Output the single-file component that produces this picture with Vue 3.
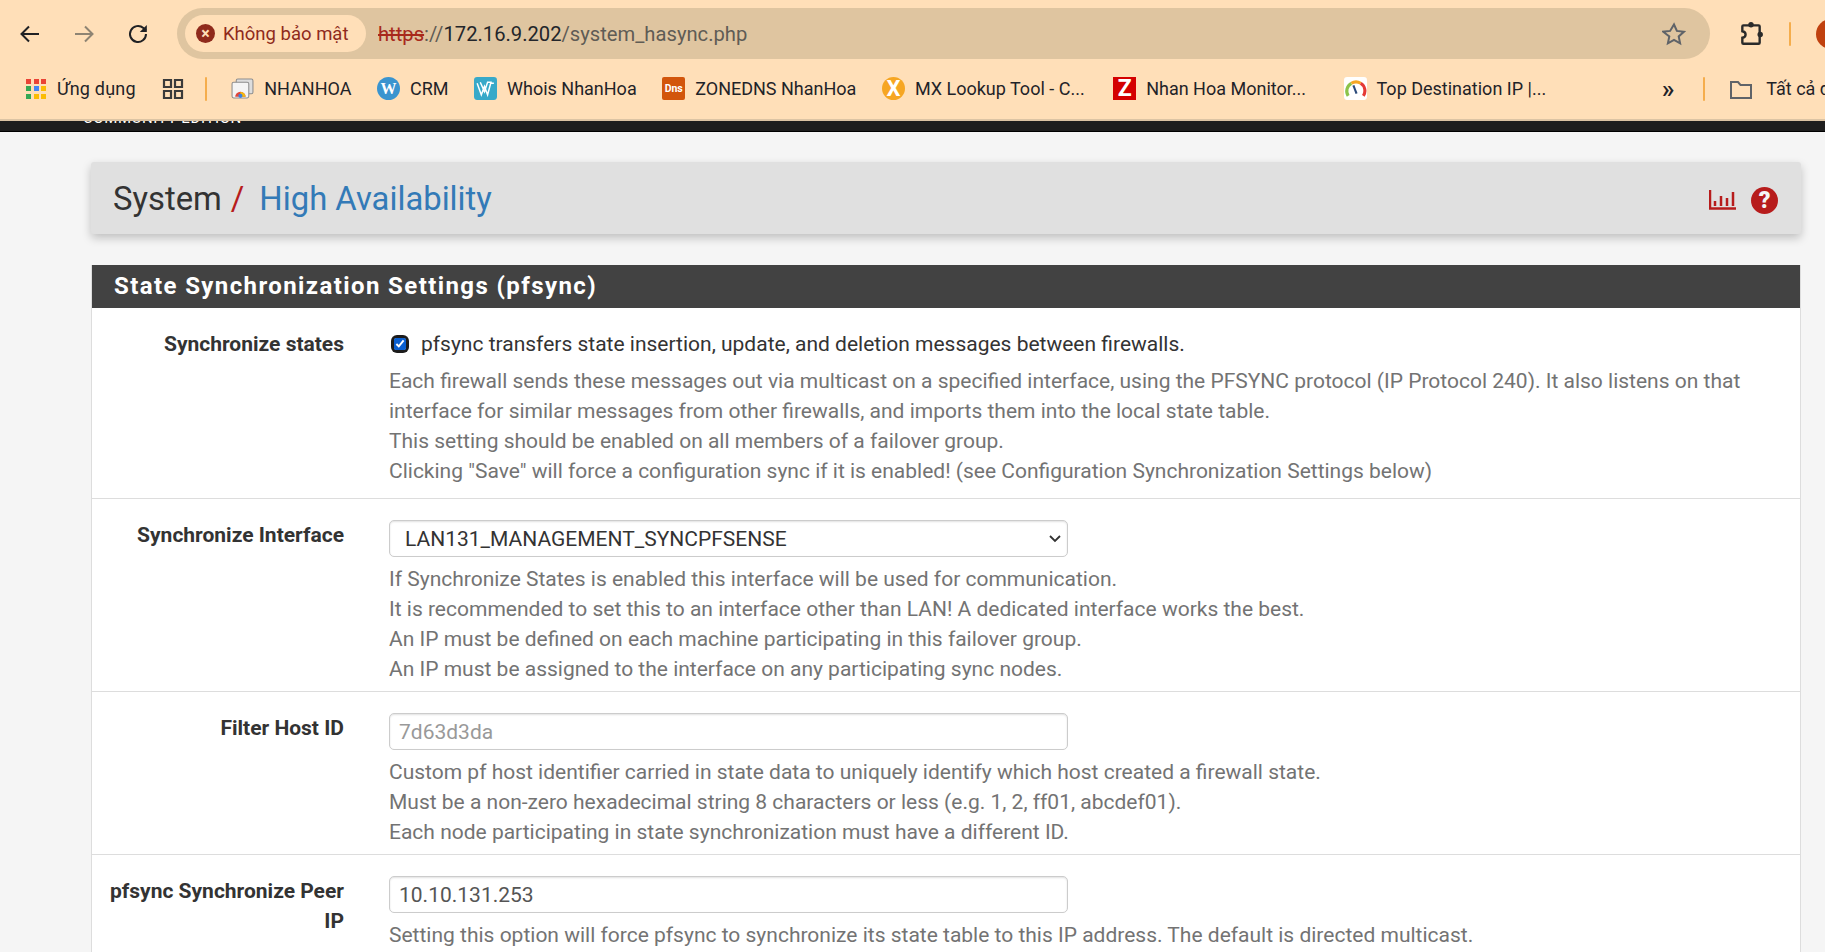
<template>
  <div class="screen">
    <!-- Browser chrome -->
    <div class="browser">
      <div class="toolbar">
        <svg class="nav back" viewBox="0 0 24 24"><path d="M21 12H4M11 4.5 3.5 12l7.5 7.5" /></svg>
        <svg class="nav forward" viewBox="0 0 24 24"><path d="M3 12h17M13 4.5l7.5 7.5-7.5 7.5" /></svg>
        <svg class="nav reload" viewBox="0 0 24 24"><path d="M20 12a8 8 0 1 1-2.6-5.9L20 8.5" /><path class="solid" d="M20.8 3v7h-7z" /></svg>
        <div class="omnibox">
          <div class="chip">
            <span class="chip-icon">×</span>
            <span>Không bảo mật</span>
          </div>
          <div class="url"><s>https</s><span class="dim">://</span>172.16.9.202<span class="dim">/system_hasync.php</span></div>
          <svg class="star" viewBox="0 0 24 24"><path d="M12 2.5l2.9 6.4 7 .8-5.2 4.7 1.4 6.9-6.1-3.5-6.1 3.5 1.4-6.9L1.100 9.700l7-.8z" /></svg>
        </div>
        <svg class="puzzle" viewBox="0 0 24 24">
          <path d="M5 4h14a1 1 0 0 1 1 1v15a1 1 0 0 1-1 1H5a1 1 0 0 1-1-1v-4.500c2-.3 3-1.500 3-3s-1-2.700-3-3V5a1 1 0 0 1 1-1z" />
          <circle cx="12" cy="3.500" r="2.500" />
          <circle cx="20.500" cy="12.500" r="2.500" />
        </svg>
        <span class="bar-sep top-sep"></span>
        <span class="avatar">T</span>
      </div>

      <div class="bookmarks">
        <span class="bm apps-bm">
          <span class="apps">
            <i v-for="(c, i) in appColors" :key="i" :style="{ background: c }"></i>
          </span>
          Ứng dụng
        </span>
        <svg class="tabs-icon" viewBox="0 0 22 22"><path d="M2 2h7v7H2zM13 2h7v7h-7zM2 13h7v7H2zM13 13h7v7h-7z" /></svg>
        <span class="bar-sep"></span>
        <span class="bm">
          <svg class="fav" viewBox="0 0 22 22">
            <rect x="5" y="2" width="16" height="14" rx="1.500" fill="#ddd" stroke="#8d8d8d" />
            <rect x="1" y="5" width="16" height="15" rx="1.500" fill="#f4f4f4" stroke="#8d8d8d" />
            <path d="M4 19a5 5 0 0 1 10 0z" fill="#e0463a" />
            <path d="M9 19v-5a5 5 0 0 1 5 5z" fill="#f2b90f" />
            <circle cx="9" cy="18" r="2" fill="#3b82e0" />
          </svg>
          NHANHOA
        </span>
        <span class="bm">
          <span class="fav round wp">W</span>
          CRM
        </span>
        <span class="bm">
          <svg class="fav" viewBox="0 0 22 22">
            <rect width="22" height="22" rx="3" fill="#38a9c9" />
            <path d="M3 6l4 11 3-8 3 8 3-11h3M6 5l4 9 3-9h4" fill="none" stroke="#fff" stroke-width="1.400" />
          </svg>
          Whois NhanHoa
        </span>
        <span class="bm">
          <span class="fav dns">Dns</span>
          ZONEDNS NhanHoa
        </span>
        <span class="bm">
          <span class="fav round mx">X</span>
          MX Lookup Tool - C...
        </span>
        <span class="bm monitor">
          <span class="fav zbx">Z</span>
          Nhan Hoa Monitor...
        </span>
        <span class="bm top-dest">
          <svg class="fav" viewBox="0 0 22 22">
            <rect width="22" height="22" rx="3" fill="#fff" />
            <path d="M4 18a8.500 8.500 0 0 1 3-12" fill="none" stroke="#8bc34a" stroke-width="3" />
            <path d="M7 6a8.500 8.500 0 0 1 9 0" fill="none" stroke="#f5a623" stroke-width="3" />
            <path d="M16 6a8.500 8.500 0 0 1 2.500 12" fill="none" stroke="#e53935" stroke-width="3" />
            <path d="M9 8l3 8" stroke="#2a4a7a" stroke-width="2" />
          </svg>
          Top Destination IP |...
        </span>
        <span class="more">»</span>
        <span class="bar-sep"></span>
        <span class="bm all">
          <svg class="folder" viewBox="0 0 24 22"><path d="M2 4h7l2.500 3H22v13H2z" /></svg>
          Tất cả dấu trang
        </span>
      </div>
    </div>

    <!-- pfSense top nav, scrolled under the browser bar -->
    <div class="topnav"><span class="edition">COMMUNITY EDITION</span></div>

    <div class="page">
      <div class="page-head">
        <h1 class="crumbs">System<span class="slash">/</span><a class="crumb-link">High Availability</a></h1>
        <div class="head-icons">
          <svg class="chart" viewBox="0 0 27 20">
            <path d="M1 0v18.500h26" />
            <path d="M6 11v5M12 6v10M18 8v8M24 2v14" />
          </svg>
          <span class="help">?</span>
        </div>
      </div>

      <div class="panel">
        <h2 class="panel-title">State Synchronization Settings (pfsync)</h2>

        <div class="row row-first">
          <label class="row-label">Synchronize states</label>
          <div class="row-body">
            <label class="check-line">
              <span class="check-ring"><input type="checkbox" checked /></span>
              pfsync transfers state insertion, update, and deletion messages between firewalls.
            </label>
            <p class="hint">
              Each firewall sends these messages out via multicast on a specified interface, using the PFSYNC protocol (IP Protocol 240). It also listens on that interface for similar messages from other firewalls, and imports them into the local state table.<br />
              This setting should be enabled on all members of a failover group.<br />
              Clicking "Save" will force a configuration sync if it is enabled! (see Configuration Synchronization Settings below)
            </p>
          </div>
        </div>

        <div class="row">
          <label class="row-label">Synchronize Interface</label>
          <div class="row-body">
            <select class="field select">
              <option>LAN131_MANAGEMENT_SYNCPFSENSE</option>
            </select>
            <p class="hint">
              If Synchronize States is enabled this interface will be used for communication.<br />
              It is recommended to set this to an interface other than LAN! A dedicated interface works the best.<br />
              An IP must be defined on each machine participating in this failover group.<br />
              An IP must be assigned to the interface on any participating sync nodes.
            </p>
          </div>
        </div>

        <div class="row">
          <label class="row-label">Filter Host ID</label>
          <div class="row-body">
            <input class="field" type="text" placeholder="7d63d3da" />
            <p class="hint">
              Custom pf host identifier carried in state data to uniquely identify which host created a firewall state.<br />
              Must be a non-zero hexadecimal string 8 characters or less (e.g. 1, 2, ff01, abcdef01).<br />
              Each node participating in state synchronization must have a different ID.
            </p>
          </div>
        </div>

        <div class="row">
          <label class="row-label">pfsync Synchronize Peer IP</label>
          <div class="row-body">
            <input class="field" type="text" value="10.10.131.253" />
            <p class="hint">
              Setting this option will force pfsync to synchronize its state table to this IP address. The default is directed multicast.
            </p>
          </div>
        </div>
      </div>
    </div>
  </div>
</template>

<script setup>
const appColors = [
  '#ea4335', '#ea4335', '#ea4335',
  '#34a853', '#4285f4', '#fbbc05',
  '#34a853', '#fbbc05', '#fbbc05'
]
</script>

<style>
html,
body {
  margin: 0;
  overflow: hidden;
}
</style>

<style scoped>
.screen {
  width: 1825px;
  height: 952px;
  overflow: hidden;
  background: #f5f5f5;
  font-family: Roboto, "Liberation Sans", sans-serif;
  color: #333;
}

.browser {
  height: 119px;
  background: #ffdfb8;
  border-bottom: 2px solid #dcc4a4;
  color: #1f2328;
}

.toolbar {
  height: 67px;
  display: flex;
  align-items: center;
  padding: 0 0 0 18px;
  box-sizing: border-box;
}

.nav {
  width: 24px;
  height: 24px;
  flex: none;
  fill: none;
  stroke: #202124;
  stroke-width: 2;
}

.nav .solid {
  fill: #202124;
  stroke: none;
}

.forward {
  margin-left: 30px;
  stroke: #8e8473;
}

.reload {
  margin-left: 30px;
}

.omnibox {
  margin-left: 27px;
  width: 1533px;
  height: 51px;
  flex: none;
  background: #dfc5a0;
  border-radius: 26px;
  display: flex;
  align-items: center;
  padding: 0 24px 0 8px;
  box-sizing: border-box;
}

.chip {
  width: 181px;
  height: 37px;
  flex: none;
  background: #ffdfb8;
  border-radius: 19px;
  display: flex;
  align-items: center;
  gap: 8px;
  padding-left: 11px;
  box-sizing: border-box;
  color: #8f2a1c;
  font-size: 18.500px;
  white-space: nowrap;
}

.chip-icon {
  width: 19px;
  height: 19px;
  border-radius: 50%;
  background: #8f2a1c;
  color: #ffdfb8;
  font: 700 16px/19px Roboto, sans-serif;
  text-align: center;
  flex: none;
}

.url {
  margin-left: 12px;
  font-size: 20.200px;
  flex: 1;
  color: #23262b;
  white-space: nowrap;
}

.url s {
  color: #a8291c;
}

.url .dim {
  color: #5f5c55;
}

.star {
  width: 24px;
  height: 24px;
  flex: none;
  fill: none;
  stroke: #5f6368;
  stroke-width: 2;
}

.puzzle {
  margin-left: 28px;
  width: 26px;
  height: 26px;
  flex: none;
  fill: none;
  stroke: #2a2a2a;
  stroke-width: 2.200;
}

.puzzle circle {
  fill: #2a2a2a;
  stroke: none;
}

.bar-sep {
  width: 2px;
  height: 24px;
  flex: none;
  background: #f5ad4c;
  border-radius: 1px;
}

.top-sep {
  margin-left: 25px;
}

.avatar {
  margin-left: 25px;
  width: 30px;
  height: 30px;
  flex: none;
  border-radius: 50%;
  background: #c0410f;
  color: #fff;
  font-size: 16px;
  line-height: 30px;
  text-align: center;
}

.bookmarks {
  height: 52px;
  padding: 0 0 9px 26px;
  box-sizing: border-box;
  display: flex;
  align-items: center;
  font-size: 18px;
  white-space: nowrap;
}

.bm {
  display: flex;
  align-items: center;
  flex: none;
  gap: 10px;
  margin-right: 25.500px;
}

.apps-bm {
  gap: 11px;
  letter-spacing: 0.2px;
}

.apps {
  width: 20px;
  height: 20px;
  display: grid;
  grid-template-columns: repeat(3, 5px);
  grid-auto-rows: 5px;
  gap: 2.500px;
}

.apps i {
  display: block;
}

.tabs-icon {
  width: 22px;
  height: 22px;
  flex: none;
  margin-left: 1px;
  margin-right: 21px;
  fill: none;
  stroke: #3a3a3a;
  stroke-width: 2.200;
}

.bookmarks > .bar-sep {
  margin-right: 24px;
}

.monitor {
  margin-left: 3px;
}

.top-dest {
  margin-left: 12px;
}

.fav {
  width: 23px;
  height: 23px;
  flex: none;
  display: block;
  text-align: center;
  color: #fff;
  font-weight: 700;
}

.round {
  border-radius: 50%;
}

.wp {
  background: #3a94cf;
  font: 700 16px/23px "Liberation Serif", serif;
}

.dns {
  background: #d2550b;
  font-size: 10.500px;
  line-height: 23px;
  border-radius: 2px;
}

.mx {
  background: #f6a623;
  font-size: 22px;
  line-height: 23px;
}

.zbx {
  background: #d40000;
  font-size: 23px;
  line-height: 23px;
}

.more {
  flex: none;
  margin-left: 90px;
  margin-right: 29px;
  font-size: 26px;
  line-height: 24px;
  font-weight: 500;
}

.folder {
  width: 24px;
  height: 22px;
  flex: none;
  fill: none;
  stroke: #5f6368;
  stroke-width: 2;
}

.all {
  margin-right: 0;
  gap: 13px;
}

.topnav {
  height: 10px;
  background: #1e1e1e;
  overflow: hidden;
  border-bottom: 1px solid #000;
}

.edition {
  display: block;
  margin: -11px 0 0 83px;
  color: #fff;
  font-size: 15px;
  line-height: 16px;
  letter-spacing: 0.6px;
}

.page {
  padding: 30px 24px 0 91px;
}

.page-head {
  height: 72px;
  box-sizing: border-box;
  background: #e0e0e0;
  border-radius: 3px;
  box-shadow: 0 4px 10px rgba(0, 0, 0, 0.22);
  display: flex;
  align-items: center;
  justify-content: space-between;
  padding: 2px 23px 0 22px;
}

.crumbs {
  margin: 0;
  font-size: 32.800px;
  font-weight: 400;
  color: #333;
}

.slash {
  color: #b71c1c;
  margin: 0 15px 0 9px;
}

.crumb-link {
  color: #337ab7;
}

.head-icons {
  display: flex;
  align-items: center;
  gap: 15px;
  margin-top: 2px;
}

.chart {
  width: 27px;
  height: 20px;
  fill: none;
  stroke: #b71c1c;
  stroke-width: 2.500;
}

.help {
  width: 27px;
  height: 27px;
  border-radius: 50%;
  background: #b71c1c;
  color: #f5f5f5;
  font-size: 23px;
  font-weight: 900;
  line-height: 27px;
  text-align: center;
}

.panel {
  margin-top: 31px;
  background: #fff;
  border: 1px solid #ddd;
  border-top: 0;
}

.panel-title {
  margin: 0;
  height: 43px;
  background: #424242;
  color: #fff;
  font-size: 24px;
  font-weight: 700;
  line-height: 43px;
  letter-spacing: 1.400px;
  padding-left: 22px;
}

.row {
  display: grid;
  grid-template-columns: 252px 1fr;
  column-gap: 45px;
  padding: 21px 35px 7px 0;
  border-top: 1px solid #ddd;
  font-size: 21px;
  line-height: 30px;
}

.row-first {
  border-top: 0;
  padding-bottom: 12px;
}

.row-label {
  text-align: right;
  font-weight: 700;
  color: #333;
}

.check-line {
  display: flex;
  align-items: center;
  gap: 12px;
  color: #333;
  margin-bottom: 7px;
}

.check-ring {
  display: flex;
  margin-left: 2px;
  padding: 3px;
  background: #1c1c1c;
  border-radius: 6px;
}

.check-ring input {
  width: 12px;
  height: 12px;
  margin: 0;
  accent-color: #0a5fd0;
}

.hint {
  margin: 0;
  color: #737373;
}

.field {
  display: block;
  width: 679px;
  height: 37px;
  box-sizing: border-box;
  background: #fff;
  border: 1px solid #ccc;
  border-radius: 5px;
  box-shadow: inset 0 1px 2px rgba(0, 0, 0, 0.12);
  padding: 0 9px;
  font: 400 21px Roboto, sans-serif;
  color: #555;
  margin-bottom: 7px;
}

.field::placeholder {
  color: #999;
}

.select {
  appearance: none;
  padding-left: 15px;
  color: #333;
  background: #fff url("data:image/svg+xml,%3Csvg xmlns='http://www.w3.org/2000/svg' viewBox='0 0 12 8'%3E%3Cpath d='M1 1l5 5 5-5' fill='none' stroke='%23333' stroke-width='1.800'/%3E%3C/svg%3E") no-repeat right 6px center / 12px 8px;
}
</style>
